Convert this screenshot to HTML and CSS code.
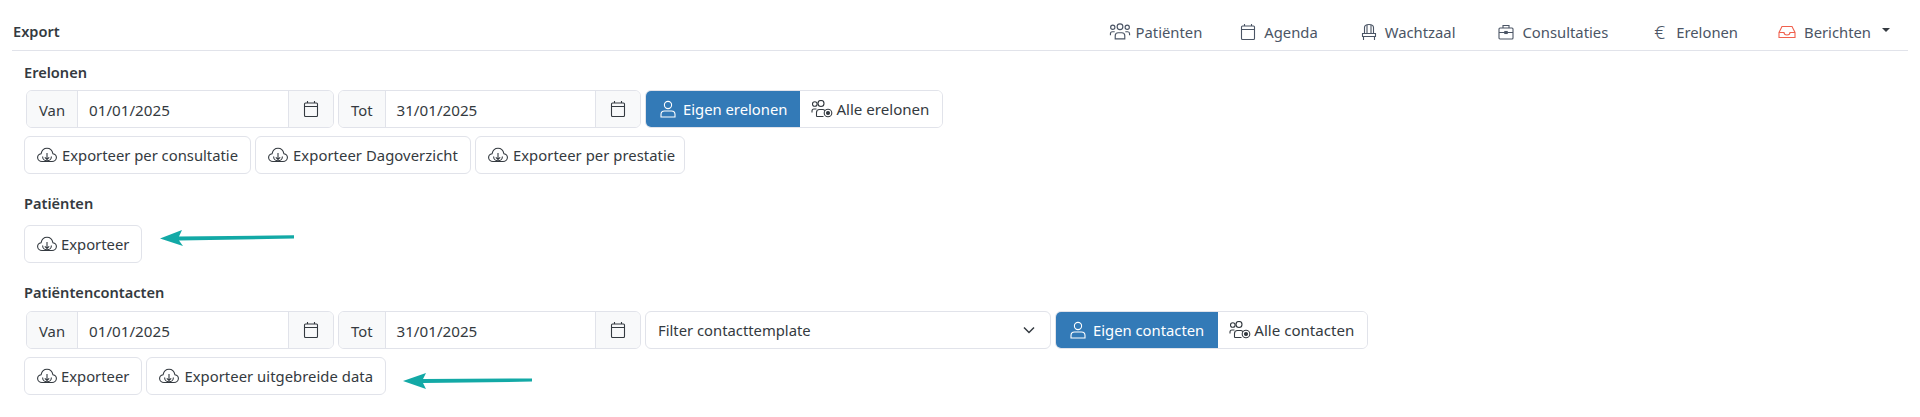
FILE: index.html
```html
<!DOCTYPE html>
<html lang="en">
<head>
    <meta charset="UTF-8">
    <title>Export</title>
    <link rel="stylesheet" href="styles.css">
</head>
<body>

<svg class="defs" width="0" height="0">
    <symbol id="i-cloud" viewBox="0 0 20 20"><path d="M5 16.500C2.700 16.500 .6 14.800 .6 12.600c0-2 1.500-3.600 3.500-3.900C4.800 5.500 7.200 3.300 10 3.300s5.200 2.200 5.900 5.400c2 .3 3.500 1.900 3.500 3.900 0 2.200-2.100 3.900-4.400 3.900z"/><path d="M5.600 11.500a4.400 4.400 0 0 0 8.800 0"/><path class="bold" d="M10 8v6.500M7.800 12.300l2.200 2.200 2.200-2.200"/></symbol>
    <symbol id="i-cal" viewBox="0 0 16 18"><rect x="1.500" y="3" width="13" height="13.500" rx="1"/><path d="M1.500 6.500h13M4.500 1v2M11.500 1v2"/></symbol>
    <symbol id="i-user" viewBox="0 0 18 18"><circle cx="9" cy="5" r="3.600"/><path d="M2 17v-2.500C2 12.500 3.500 11 5.500 11h7c2 0 3.500 1.500 3.500 3.500V17z"/></symbol>
    <symbol id="i-users" viewBox="0 0 22 18"><circle cx="3.800" cy="4" r="2.300"/><circle cx="10" cy="3.500" r="3"/><path d="M1 12.500V11c0-1.300 1-2 2-2h2.500M5.500 16.500v-4c0-1.800 1-3 3-3h3c1 0 2 .5 2.500 1.200M5.500 16.500h7"/><circle cx="17" cy="13" r="3.800"/><circle class="dot" cx="17" cy="13" r="1.500"/></symbol>
    <symbol id="i-group" viewBox="0 0 20 16"><circle cx="3.200" cy="4" r="2"/><circle cx="10" cy="3.500" r="2.700"/><circle cx="16.800" cy="4" r="2"/><path d="M1 11.500V10c0-1 .8-1.800 1.800-1.800H5M19 11.500V10c0-1-.8-1.800-1.800-1.800H15M5.500 15v-3c0-1.700 1-2.800 2.800-2.800h3.400c1.800 0 2.800 1.100 2.800 2.800v3z"/></symbol>
    <symbol id="i-chair" viewBox="0 0 16 18"><path d="M3.500 10V4.500C3.500 2.500 5 1.500 8 1.500s4.500 1 4.500 3V10M6 2v8M10 2v8M1.500 10.500h13v3h-13zM2.500 13.500V17M13.500 13.500V17"/></symbol>
    <symbol id="i-case" viewBox="0 0 16 18"><rect x="1" y="5" width="14" height="11" rx="1"/><path d="M5 5V2.500h6V5M1 9.500h14"/><rect x="6.800" y="8.500" width="2.400" height="2"/></symbol>
    <symbol id="i-inbox" viewBox="0 0 18 14"><path d="M1 7.500L4 1.500h10l3 6v5H1zM1 7.500h5c0 1.500 1.200 2.500 3 2.500s3-1 3-2.500h5"/></symbol>
</svg>

<div class="page">
    <div class="topbar">
        <div class="page-title">Export</div>
        <nav class="nav">
            <a class="nav-item nav-patients"><svg class="ico ico-group"><use href="#i-group"/></svg>Patiënten</a>
            <a class="nav-item"><svg class="ico ico-nav"><use href="#i-cal"/></svg>Agenda</a>
            <a class="nav-item"><svg class="ico ico-nav"><use href="#i-chair"/></svg>Wachtzaal</a>
            <a class="nav-item nav-consult"><svg class="ico ico-nav"><use href="#i-case"/></svg>Consultaties</a>
            <a class="nav-item nav-fees"><span class="euro">€</span>Erelonen</a>
            <a class="nav-item nav-messages"><svg class="ico ico-inbox"><use href="#i-inbox"/></svg>Berichten<span class="caret"></span></a>
        </nav>
    </div>

    <section class="section sec-fees">
        <h2>Erelonen</h2>
        <div class="row row-form">
            <div class="date-group g-van">
                <span class="addon">Van</span>
                <span class="date-value">01/01/2025</span>
                <span class="addon addon-ico"><svg class="ico ico-cal"><use href="#i-cal"/></svg></span>
            </div>
            <div class="date-group g-tot">
                <span class="addon">Tot</span>
                <span class="date-value">31/01/2025</span>
                <span class="addon addon-ico"><svg class="ico ico-cal"><use href="#i-cal"/></svg></span>
            </div>
            <div class="toggle">
                <button class="toggle-on"><svg class="ico ico-user"><use href="#i-user"/></svg>Eigen erelonen</button>
                <button class="toggle-off"><svg class="ico ico-users"><use href="#i-users"/></svg>Alle erelonen</button>
            </div>
        </div>
        <div class="row row-btns">
            <button class="btn"><svg class="ico ico-cloud"><use href="#i-cloud"/></svg>Exporteer per consultatie</button>
            <button class="btn btn-day"><svg class="ico ico-cloud"><use href="#i-cloud"/></svg>Exporteer Dagoverzicht</button>
            <button class="btn btn-tight"><svg class="ico ico-cloud"><use href="#i-cloud"/></svg>Exporteer per prestatie</button>
        </div>
    </section>

    <section class="section sec-patients">
        <h2>Patiënten</h2>
        <div class="row row-btns">
            <button class="btn btn-short"><svg class="ico ico-cloud"><use href="#i-cloud"/></svg>Exporteer</button>
            <svg class="arrow arrow-one" width="134" height="18" viewBox="0 0 134 18"><path d="M0 9.500L22 1l-3 6.500 115-1.300v3.300L19 11.500 23 17z"/></svg>
        </div>
    </section>

    <section class="section sec-contacts">
        <h2>Patiëntencontacten</h2>
        <div class="row row-form">
            <div class="date-group g-van">
                <span class="addon">Van</span>
                <span class="date-value">01/01/2025</span>
                <span class="addon addon-ico"><svg class="ico ico-cal"><use href="#i-cal"/></svg></span>
            </div>
            <div class="date-group g-tot">
                <span class="addon">Tot</span>
                <span class="date-value">31/01/2025</span>
                <span class="addon addon-ico"><svg class="ico ico-cal"><use href="#i-cal"/></svg></span>
            </div>
            <div class="select-box">
                <span>Filter contacttemplate</span>
                <svg class="chevron" width="12" height="8" viewBox="0 0 12 8"><path d="M1 1.500l5 5 5-5"/></svg>
            </div>
            <div class="toggle">
                <button class="toggle-on"><svg class="ico ico-user"><use href="#i-user"/></svg>Eigen contacten</button>
                <button class="toggle-off"><svg class="ico ico-users"><use href="#i-users"/></svg>Alle contacten</button>
            </div>
        </div>
        <div class="row row-btns">
            <button class="btn btn-short"><svg class="ico ico-cloud"><use href="#i-cloud"/></svg>Exporteer</button>
            <button class="btn btn-wide"><svg class="ico ico-cloud"><use href="#i-cloud"/></svg>Exporteer uitgebreide data</button>
            <svg class="arrow arrow-two" width="129" height="18" viewBox="0 0 129 18"><path d="M0 9L23 1l-3 6 109-.6v3.200L20 11l3 6z"/></svg>
        </div>
    </section>
</div>

</body>
</html>
```

FILE: styles.css
```css
* {
    box-sizing: border-box;
}
body {
    margin: 0;
    background-color: #ffffff;
    color: #343a40;
    font-family: "Noto Sans", "Open Sans", sans-serif;
    font-size: 14.8px;
    line-height: 20px;
}
.defs {
    display: none;
}
.page {
    padding: 0 12px;
}
.topbar {
    display: flex;
    justify-content: space-between;
    align-items: center;
    height: 51px;
    padding-top: 13px;
    border-bottom: 1px solid #e1e3ea;
}
.page-title {
    margin-left: 1px;
    margin-bottom: 2px;
    font-weight: 600;
    font-size: 14.6px;
}
.nav {
    display: flex;
    align-items: center;
    color: #4b5565;
}
.nav-item {
    display: flex;
    align-items: center;
    margin-right: 43px;
}
.nav-patients {
    margin-right: 38px;
}
.nav-consult {
    margin-right: 46px;
}
.nav-fees {
    margin-right: 40px;
}
.nav-messages {
    margin-right: 18px;
}
.euro {
    width: 22px;
    font-size: 19px;
    font-weight: 300;
}
.caret {
    width: 0;
    height: 0;
    margin-left: 11px;
    margin-bottom: 4px;
    border-left: 4px solid transparent;
    border-right: 4px solid transparent;
    border-top: 4px solid #343a40;
}
.ico {
    flex: none;
    fill: none;
    stroke: currentColor;
    stroke-width: 1.1;
}
.ico-group {
    width: 22px;
    height: 17px;
    margin-right: 5px;
}
.ico-nav {
    width: 16px;
    height: 18px;
    margin-right: 8px;
}
.ico-inbox {
    width: 18px;
    height: 14px;
    margin-right: 8px;
    stroke: #f0614e;
}
.section {
    padding-left: 12px;
}
.section h2 {
    margin: 0;
    padding-bottom: 2px;
    font-size: 14.6px;
    font-weight: 600;
    line-height: 18px;
}
.sec-fees {
    padding-top: 12px;
}
.sec-patients,
.sec-contacts {
    padding-top: 20px;
}
.row {
    display: flex;
    align-items: center;
    gap: 4px;
}
.row-form {
    margin-top: 7px;
    padding-left: 2px;
}
.sec-contacts .row-form {
    margin-top: 8px;
}
.row-btns {
    margin-top: 8px;
}
.sec-patients .row-btns {
    margin-top: 11px;
}
.date-group {
    display: flex;
    height: 38px;
    border: 1px solid #e1e3ea;
    border-radius: 6px;
    overflow: hidden;
}
.g-van {
    width: 308px;
}
.g-tot {
    width: 303px;
}
.addon {
    display: flex;
    align-items: center;
    justify-content: center;
    padding: 1px 12px 0;
    background-color: #f8f9fa;
    border-right: 1px solid #e1e3ea;
}
.addon-ico {
    width: 45px;
    padding: 0;
    border-right: none;
    border-left: 1px solid #e1e3ea;
}
.date-value {
    flex: 1;
    align-self: center;
    padding: 1px 0 0 11px;
    font-size: 15.2px;
}
.ico-cal {
    width: 16px;
    height: 18px;
}
.toggle {
    display: flex;
    height: 38px;
    border: 1px solid #e1e3ea;
    border-radius: 6px;
    overflow: hidden;
}
.toggle button {
    display: flex;
    align-items: center;
    height: 100%;
    border: none;
    font: inherit;
    color: #343a40;
    background-color: #ffffff;
}
.toggle .toggle-on {
    padding: 0 13px;
    background-color: #337ab7;
    color: #ffffff;
}
.sec-contacts .toggle-on {
    padding-right: 14px;
}
.toggle .toggle-off {
    padding: 0 13px 0 11px;
    font-size: 15.1px;
}
.ico-user {
    width: 18px;
    height: 18px;
    margin-right: 6px;
}
.ico-users {
    width: 22px;
    height: 18px;
    margin-right: 3px;
}
.dot {
    fill: currentColor;
}
.btn {
    display: flex;
    align-items: center;
    height: 38px;
    padding: 0 12px;
    background-color: #ffffff;
    border: 1px solid #e1e3ea;
    border-radius: 6px;
    font: inherit;
    color: #343a40;
}
.btn-day {
    letter-spacing: .07px;
}
.btn-tight {
    padding-right: 9px;
    letter-spacing: .05px;
}
.btn-short .ico-cloud {
    margin-right: 4px;
}
.btn-wide {
    letter-spacing: .05px;
}
.ico-cloud {
    width: 20px;
    height: 20px;
    margin-right: 5px;
}
.select-box {
    display: flex;
    align-items: center;
    justify-content: space-between;
    width: 406px;
    height: 38px;
    padding: 0 15px 0 12px;
    border: 1px solid #e1e3ea;
    border-radius: 6px;
}
.chevron {
    fill: none;
    stroke: #343a40;
    stroke-width: 1.5;
}
.arrow {
    flex: none;
    fill: #13a9a6;
}
.arrow-one {
    margin-left: 14px;
    margin-top: -12px;
}
.arrow-two {
    margin-left: 13px;
    margin-top: 10px;
}
```
